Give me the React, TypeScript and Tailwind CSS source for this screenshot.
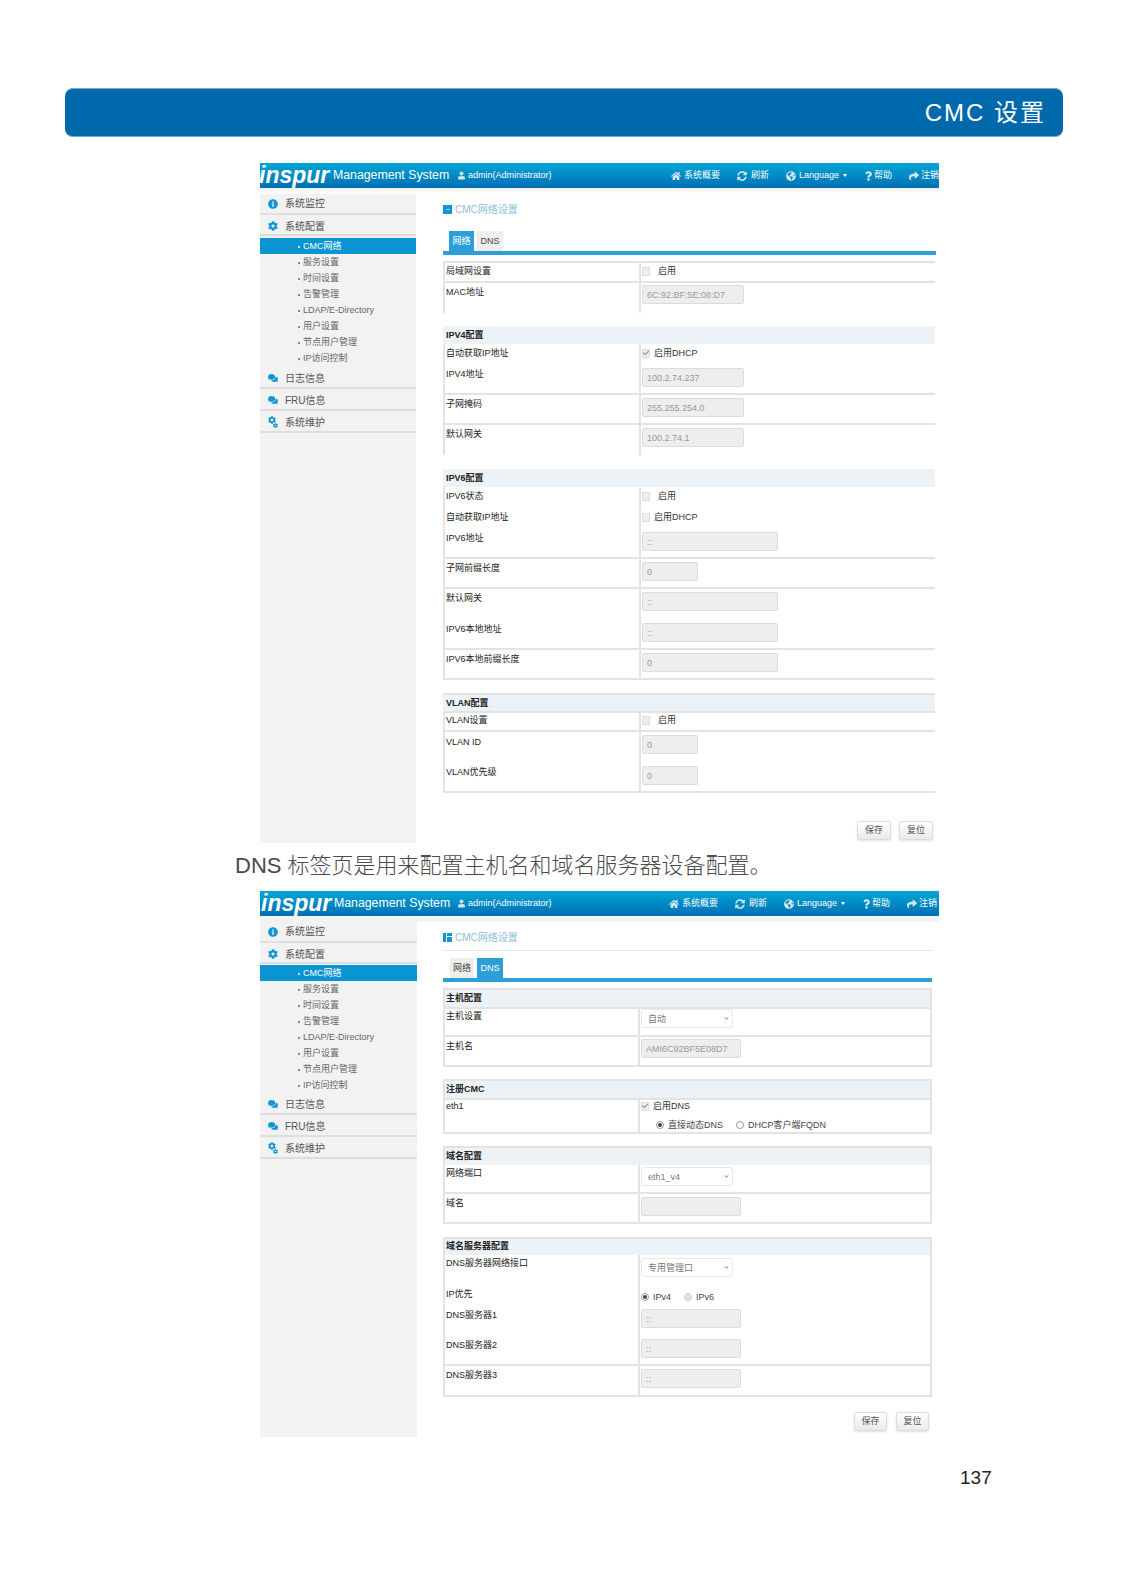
import React from 'react';
import { FaCheck, FaChevronDown, FaCog, FaComments, FaGlobeAmericas, FaHome, FaInfoCircle, FaQuestion, FaShare, FaSyncAlt, FaUser } from 'react-icons/fa';

const FONT = "font-['Liberation_Sans','Noto_Sans_CJK_SC',sans-serif]";

const Header: React.FC<{ second?: boolean }> = ({ second }) => (
  <div className="flex h-[25px] items-center overflow-hidden bg-gradient-to-b from-[#02a6d6] to-[#006fb3] text-white">
    <span className={second ? 'ml-[1px] w-[70px] shrink-0 text-[23px] font-bold italic leading-[25px]' : 'ml-[-1px] w-[70px] shrink-0 text-[23px] font-bold italic leading-[25px]'}>inspur</span>
    <span className={second ? 'ml-[3px] w-[116px] shrink-0 whitespace-nowrap pb-[1px] text-[12.3px] leading-[14px]' : 'ml-[4px] w-[117px] shrink-0 whitespace-nowrap pb-[1px] text-[12.3px] leading-[14px]'}>Management System</span>
    <FaUser className="ml-[8px] h-[9px] w-[7px] shrink-0 text-[#cfe6f2]" />
    <span className="ml-[3px] w-[80px] shrink-0 whitespace-nowrap text-[9px]">admin(Administrator)</span>
    <div className={second ? 'ml-[121px] flex shrink-0 items-center text-[9px]' : 'ml-[123px] flex shrink-0 items-center text-[9px]'}>
      <FaHome className="h-[10px] w-[10px] text-[#d5e9f4]" />
      <span className="ml-[3px] w-[36px] whitespace-nowrap">系统概要</span>
      <FaSyncAlt className="ml-[17px] h-[10px] w-[10px] text-[#d5e9f4]" />
      <span className="ml-[4px] w-[18px] whitespace-nowrap">刷新</span>
      <FaGlobeAmericas className="ml-[17px] h-[10px] w-[10px] text-[#d5e9f4]" />
      <span className="ml-[3px] whitespace-nowrap">Language</span>
      <span className="ml-[4px] h-0 w-0 border-x-[2px] border-t-[3px] border-x-transparent border-t-white" />
      <FaQuestion className="ml-[18px] h-[10px] w-[7px] text-[#d5e9f4]" />
      <span className="ml-[2px] w-[18px] whitespace-nowrap">帮助</span>
      <FaShare className="ml-[17px] h-[10px] w-[10px] text-[#d5e9f4]" />
      <span className="ml-[2px] whitespace-nowrap">注销</span>
    </div>
  </div>
);

const MainItem: React.FC<{ icon: React.ReactNode; label: string; h: string }> = ({ icon, label, h }) => (
  <div className={`flex items-center border-b-2 border-[#dedede] pl-[8px] text-[10px] text-[#555] ${h}`}>
    <span className="flex w-[10px] justify-center text-[#0e96d4]">{icon}</span>
    <span className="ml-[7px]">{label}</span>
  </div>
);

const SUBS = ['CMC网络', '服务设置', '时间设置', '告警管理', 'LDAP/E-Directory', '用户设置', '节点用户管理', 'IP访问控制'];

const Sidebar: React.FC<{ second?: boolean }> = ({ second }) => (
  <aside className={second ? 'w-[157px] shrink-0 bg-[#f2f2f2]' : 'w-[156px] shrink-0 bg-[#f2f2f2]'}>
    <MainItem h="h-[21px]" icon={<FaInfoCircle className="h-[10px] w-[10px]" />} label="系统监控" />
    <MainItem h="h-[21px] pt-[3px]" icon={<FaCog className="h-[10px] w-[10px]" />} label="系统配置" />
    <div className={second ? 'mb-0 mt-[1px]' : 'mb-[1px] mt-[2px]'}>
      {SUBS.map((s, i) => (
        <div key={s} className={i === 0 ? 'flex h-[16px] items-center bg-[#0a94d2] pl-[38px] pt-[1px] text-[9px] text-white' : 'flex h-[16px] items-center pl-[38px] pt-[1px] text-[9px] text-[#666]'}>
          <span className="mr-[3px] h-[2px] w-[2px] rounded-full bg-current" />
          {s}
        </div>
      ))}
    </div>
    <MainItem h="h-[22px] pt-[2px]" icon={<FaComments className="h-[10px] w-[10px]" />} label="日志信息" />
    <MainItem h="h-[22px] pt-[2px]" icon={<FaComments className="h-[10px] w-[10px]" />} label="FRU信息" />
    <MainItem
      h="h-[22px] pt-[2px]"
      icon={
        <span className="relative block h-[12px] w-[10px]">
          <FaCog className="h-[8px] w-[8px]" />
          <FaCog className="absolute bottom-0 right-0 h-[5px] w-[5px]" />
        </span>
      }
      label="系统维护"
    />
  </aside>
);

const Title: React.FC<{ second?: boolean }> = ({ second }) => (
  <div className="mt-[9px] flex h-[13px] items-center">
    {second ? (
      <span className="flex h-[9px] w-[9px] gap-[1px]">
        <span className="h-full w-[3px] bg-[#0e96d4]" />
        <span className="flex h-full flex-1 flex-col gap-[1px]">
          <span className="h-[3px] bg-[#0e96d4]" />
          <span className="flex-1 bg-[#0e96d4]" />
        </span>
      </span>
    ) : (
      <span className="flex h-[9px] w-[9px] items-center justify-center bg-[#0e96d4]">
        <span className="h-[1px] w-[4px] bg-[#8fd0ec]" />
      </span>
    )}
    <span className="ml-[3px] text-[10px] text-[#8dbfd8]">CMC网络设置</span>
  </div>
);

const Tabs: React.FC<{ second?: boolean }> = ({ second }) => (
  <div className={second ? 'ml-[7px] flex h-[20px] gap-[3px] text-[9px]' : 'ml-[6px] mt-[15px] flex h-[20px] gap-[3px] text-[9px]'}>
    <span className={second ? 'flex w-[24px] items-center justify-center bg-[#eeeeee] pt-[1px] text-[#444]' : 'flex w-[25px] items-center justify-center bg-[#2c9fd8] pt-[1px] text-white'}>网络</span>
    <span className={second ? 'flex w-[26px] items-center justify-center bg-[#2c9fd8] pt-[1px] text-white' : 'flex w-[26px] items-center justify-center bg-[#eeeeee] pt-[1px] text-[#444]'}>DNS</span>
  </div>
);

const Row: React.FC<{ h: string; label: string; top?: string; ctrl?: string; line?: boolean; dns?: boolean; children?: React.ReactNode }> = ({ h, label, top = 'pt-[3px]', ctrl = 'pt-[3px]', line, dns, children }) => (
  <div className={`flex text-[9px] leading-[12px] text-[#222] ${h} ${line ? 'border-b-2 border-[#e3e3e3]' : ''}`}>
    <div className={`${dns ? 'w-[193px]' : 'w-[194px]'} shrink-0 pl-[1px] ${top}`}>{label}</div>
    <div className={`flex-1 border-l-2 border-[#e3e3e3] pl-[1px] ${ctrl}`}>{children}</div>
  </div>
);

const Head: React.FC<{ title: string; h: string }> = ({ title, h }) => (
  <div className={`flex items-center bg-[#ecf2f6] text-[9px] font-bold text-[#222] ${h}`}>{title}</div>
);

const Box: React.FC<{ w: string; value?: string }> = ({ w, value }) => (
  <div className={`flex h-[19px] items-center rounded-[2px] border border-[#dcdcdc] bg-[#eeeeee] pl-[4px] text-[9px] text-[#999] ${w}`}>{value}</div>
);

const Select: React.FC<{ value: string }> = ({ value }) => (
  <div className="flex h-[19px] w-[92px] items-center justify-between rounded-[3px] border border-[#e8e8e8] bg-white pl-[6px] pr-[3px] text-[9px] text-[#777]">
    {value}
    <FaChevronDown className="h-[5px] w-[5px] text-[#888]" />
  </div>
);

const Check: React.FC<{ label: string; checked?: boolean; gap?: string }> = ({ label, checked, gap = 'ml-[8px]' }) => (
  <div className="flex h-[12px] items-center text-[#333]">
    <span className="flex h-[9px] w-[8px] items-center justify-center border border-[#dddddd] bg-[#eeeeee]">
      {checked && <FaCheck className="h-[6px] w-[6px] text-[#999]" />}
    </span>
    <span className={gap}>{label}</span>
  </div>
);

const Radio: React.FC<{ label: string; on?: boolean; muted?: boolean; cls: string }> = ({ label, on, muted, cls }) => (
  <span className={`flex items-center ${cls}`}>
    <span className={muted ? 'h-[8px] w-[8px] rounded-full border border-[#cccccc] bg-[#e2e2e2]' : 'flex h-[8px] w-[8px] items-center justify-center rounded-full border border-[#999] bg-white'}>
      {on && <span className="h-[4px] w-[4px] rounded-full bg-[#444]" />}
    </span>
    <span className="ml-[4px] whitespace-nowrap text-[#444]">{label}</span>
  </span>
);

const Buttons: React.FC<{ second?: boolean }> = ({ second }) => (
  <div className={second ? 'mt-[15px] flex justify-end gap-[9px] pr-[9px]' : 'mt-[28px] flex justify-end gap-[8px] pr-[5px]'}>
    {['保存', '复位'].map(b => (
      <span key={b} className={`${second ? 'w-[33px]' : 'w-[34px]'} flex h-[19px] items-center justify-center rounded-[2px] border border-[#dddddd] bg-gradient-to-b from-white to-[#eaeaea] text-[9px] text-[#555] shadow-sm`}>{b}</span>
    ))}
  </div>
);

const NetworkTab: React.FC = () => (
  <div className="ml-[27px] w-[495px] pb-[3px]">
    <Title />
    <Tabs />
    <div className="h-[4px] w-[493px] bg-[#2c9fd8]" />

    <div className="mt-[6px] w-[492px] border-l-2 border-t-2 border-[#e3e3e3]">
      <Row h="h-[20px]" label="局域网设置" top="pt-[2px]" ctrl="pt-[2px]" line><Check label="启用" /></Row>
      <Row h="h-[30px]" label="MAC地址" ctrl="pt-[2px]"><Box w="w-[102px]" value="6C:92:BF:5E:08:D7" /></Row>
    </div>

    <div className="mt-[13px] w-[492px]">
      <Head title="IPV4配置" h="h-[18px] pl-[3px] pt-[1px]" />
      <div className="border-l-2 border-[#e3e3e3]">
        <Row h="h-[20px]" label="自动获取IP地址"><Check label="启用DHCP" checked gap="ml-[4px]" /></Row>
        <Row h="h-[31px]" label="IPV4地址" top="pt-[4px]" ctrl="pt-[4px]" line><Box w="w-[102px]" value="100.2.74.237" /></Row>
        <Row h="h-[30px]" label="子网掩码" line><Box w="w-[102px]" value="255.255.254.0" /></Row>
        <Row h="h-[30px]" label="默认网关"><Box w="w-[102px]" value="100.2.74.1" /></Row>
      </div>
    </div>

    <div className="mt-[14px] w-[492px]">
      <Head title="IPV6配置" h="h-[18px] pl-[3px] pt-[1px]" />
      <div className="border-l-2 border-[#e3e3e3]">
        <Row h="h-[20px]" label="IPV6状态"><Check label="启用" /></Row>
        <Row h="h-[20px]" label="自动获取IP地址" top="pt-[4px]" ctrl="pt-[4px]"><Check label="启用DHCP" gap="ml-[4px]" /></Row>
        <Row h="h-[32px]" label="IPV6地址" top="pt-[5px]" ctrl="pt-[5px]" line><Box w="w-[136px]" value="::" /></Row>
        <Row h="h-[30px]" label="子网前缀长度" line><Box w="w-[56px]" value="0" /></Row>
        <Row h="h-[30px]" label="默认网关"><Box w="w-[136px]" value="::" /></Row>
        <Row h="h-[31px]" label="IPV6本地地址" top="pt-[4px]" ctrl="pt-[4px]" line><Box w="w-[136px]" value="::" /></Row>
        <Row h="h-[30px]" label="IPV6本地前缀长度" line><Box w="w-[136px]" value="0" /></Row>
      </div>
    </div>

    <div className="mt-[13px] w-[492px]">
      <Head title="VLAN配置" h="h-[18px] border-t-2 border-[#e3e3e3] pl-[3px] pt-[1px]" />
      <div className="border-l-2 border-t-2 border-[#e3e3e3]">
        <Row h="h-[19px]" label="VLAN设置" top="pt-[1px]" ctrl="pt-[1px]" line><Check label="启用" /></Row>
        <Row h="h-[31px]" label="VLAN ID" top="pt-[4px]"><Box w="w-[56px]" value="0" /></Row>
        <Row h="h-[30px]" label="VLAN优先级" line><Box w="w-[56px]" value="0" /></Row>
      </div>
    </div>

    <Buttons />
  </div>
);

const Card: React.FC<{ mt?: string; children: React.ReactNode }> = ({ mt = 'mt-[12px]', children }) => (
  <div className={`w-[489px] border-2 border-[#e3e3e3] ${mt}`}>{children}</div>
);

const DnsTab: React.FC = () => (
  <div className="ml-[26px] w-[495px] pb-[6px]">
    <Title second />
    <div className="mb-[7px] mt-[6px] h-[1px] w-[489px] bg-[#e8e8e8]" />
    <Tabs second />
    <div className="h-[4px] w-[489px] bg-[#2c9fd8]" />

    <Card mt="mt-[6px]">
      <Head title="主机配置" h="h-[17px] pl-[1px]" />
      <Row dns h="h-[30px] border-t-2 border-[#e3e3e3]" label="主机设置" top="pt-[1px]" ctrl="pt-0" line><Select value="自动" /></Row>
      <Row dns h="h-[28px]" label="主机名" top="pt-[3px]" ctrl="pt-[2px]"><Box w="w-[100px]" value="AMI6C92BF5E08D7" /></Row>
    </Card>

    <Card>
      <Head title="注册CMC" h="h-[17px] pl-[1px]" />
      <Row dns h="h-[34px] border-t-2 border-[#e3e3e3]" label="eth1" top="pt-0" ctrl="pt-0">
        <Check label="启用DNS" checked gap="ml-[4px]" />
        <div className="mt-[7px] flex">
          <Radio on label="直接动态DNS" cls="ml-[15px]" />
          <Radio label="DHCP客户端FQDN" cls="ml-[13px]" />
        </div>
      </Row>
    </Card>

    <Card>
      <Head title="域名配置" h="h-[17px] pl-[1px]" />
      <Row dns h="h-[29px]" label="网络端口" top="pt-[2px]" ctrl="pt-[2px]" line><Select value="eth1_v4" /></Row>
      <Row dns h="h-[28px]" label="域名"><Box w="w-[100px]" /></Row>
    </Card>

    <Card mt="mt-[13px]">
      <Head title="域名服务器配置" h="h-[16px] pl-[1px]" />
      <Row dns h="h-[33px]" label="DNS服务器网络接口" top="pt-[2px]"><Select value="专用管理口" /></Row>
      <Row dns h="h-[18px]" label="IP优先" top="pt-0" ctrl="pt-[3px]">
        <div className="flex">
          <Radio on label="IPv4" cls="" />
          <Radio muted label="IPv6" cls="ml-[13px]" />
        </div>
      </Row>
      <Row dns h="h-[30px]" label="DNS服务器1"><Box w="w-[100px]" value="::" /></Row>
      <Row dns h="h-[30px]" label="DNS服务器2" line><Box w="w-[100px]" value="::" /></Row>
      <Row dns h="h-[29px]" label="DNS服务器3"><Box w="w-[100px]" value="::" /></Row>
    </Card>

    <Buttons second />
  </div>
);

const Shot: React.FC<{ second?: boolean; children: React.ReactNode }> = ({ second, children }) => (
  <div className="ml-[260px] w-[679px] overflow-hidden">
    <Header second={second} />
    <div className={second ? 'h-[6px] bg-[#f3f3f6]' : 'h-[6px] bg-gradient-to-b from-[#f0f0f4] to-white'} />
    <div className="flex">
      <Sidebar second={second} />
      {children}
    </div>
  </div>
);

const App: React.FC = () => {
  return (
    <div className={`${FONT} h-[1571px] w-[1128px] overflow-hidden bg-white pt-[88px]`}>
      <div className="ml-[65px] flex h-[49px] w-[998px] items-center justify-end rounded-[8px] border-y border-[#6fa8d0] bg-[#0069ac] pr-[17px] text-[24px] tracking-[2px] text-white">
        CMC 设置
      </div>
      <div className="mt-[26px]">
        <Shot><NetworkTab /></Shot>
      </div>
      <div className="flex h-[48px] items-center pb-[3px] pl-[235px] text-[22px] font-light text-[#4a4a4a]">
        DNS 标签页是用来配置主机名和域名服务器设备配置。
      </div>
      <Shot second><DnsTab /></Shot>
      <div className="mt-[30px] pl-[960px] text-[19px] leading-[22px] text-[#222]">137</div>
    </div>
  );
};

export default App;
